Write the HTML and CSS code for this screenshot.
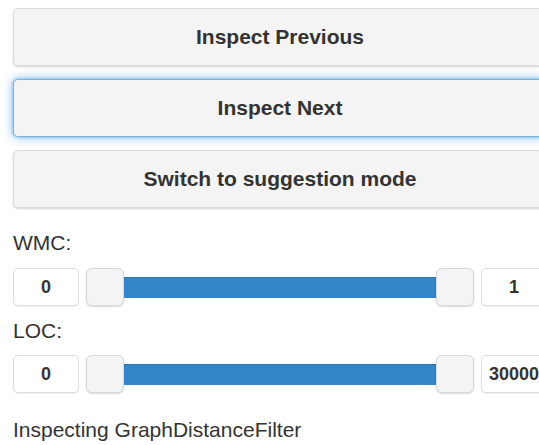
FILE: index.html
```html
<!DOCTYPE html>
<html lang="en">
<head>
<meta charset="utf-8">
<title>Inspector</title>
<link rel="stylesheet" href="styles.css">
</head>
<body>
<div class="panel">
  <button class="btn">Inspect Previous</button>
  <button class="btn btn-focus">Inspect Next</button>
  <button class="btn">Switch to suggestion mode</button>

  <div class="field-label">WMC:</div>
  <div class="range-row">
    <div class="num-box">0</div>
    <div class="slider">
      <span class="handle"></span>
      <span class="track"></span>
      <span class="handle"></span>
    </div>
    <div class="num-box">1</div>
  </div>

  <div class="field-label">LOC:</div>
  <div class="range-row range-row-loc">
    <div class="num-box">0</div>
    <div class="slider">
      <span class="handle"></span>
      <span class="track"></span>
      <span class="handle"></span>
    </div>
    <div class="num-box">30000</div>
  </div>

  <div class="status">Inspecting GraphDistanceFilter</div>
</div>
</body>
</html>
```
FILE: styles.css
```css
html {
  overflow: hidden;
}

body {
  margin: 0;
  background: #ffffff;
  font-family: "Liberation Sans", Arial, sans-serif;
  color: #333333;
}

.panel {
  display: flex;
  flex-direction: column;
  width: 534px;
  padding: 8px 0 0 13px;
}

.btn {
  display: block;
  width: 100%;
  height: 58px;
  margin: 0 0 13px 0;
  padding: 0 12px;
  background: #f4f4f4;
  border: 1px solid #dcdcdc;
  border-radius: 5px;
  box-shadow: 0 1px 2px rgba(0, 0, 0, 0.18);
  font-family: inherit;
  font-size: 21px;
  font-weight: bold;
  color: #333333;
  text-align: center;
}

/* keyboard focus ring */
.btn-focus {
  border-color: #7fb4e0;
  box-shadow: 0 0 3px rgba(102, 175, 233, 0.9), 0 0 11px rgba(102, 175, 233, 0.8);
}

.field-label {
  font-size: 21px;
  line-height: 30px;
  margin-top: 7px;
}

.range-row {
  display: flex;
  align-items: center;
  gap: 7px;
  height: 38px;
  margin-top: 10px;
}

.range-row-loc {
  margin-top: 9px;
}

.range-row + .field-label {
  margin-top: 10px;
}

.num-box {
  box-sizing: border-box;
  flex: 0 0 66px;
  width: 66px;
  height: 38px;
  padding: 0 6px;
  background: #ffffff;
  border: 1px solid #dddddd;
  border-radius: 5px;
  box-shadow: 0 1px 1px rgba(0, 0, 0, 0.06);
  font-size: 18px;
  font-weight: bold;
  line-height: 36px;
  text-align: center;
  white-space: nowrap;
  overflow: visible;
}

.slider {
  flex: 1;
  display: flex;
  align-items: center;
  height: 38px;
}

.handle {
  box-sizing: border-box;
  flex: 0 0 38px;
  height: 38px;
  background: #f4f4f4;
  border: 1px solid #d8d8d8;
  border-radius: 6px;
  box-shadow: 0 1px 2px rgba(0, 0, 0, 0.15);
}

.track {
  flex: 1;
  height: 21px;
  background: #3386c8;
  border-top: 1px solid #2c78b6;
  box-sizing: border-box;
}

.status {
  font-size: 21px;
  line-height: 30px;
  margin-top: 22px;
}
```
